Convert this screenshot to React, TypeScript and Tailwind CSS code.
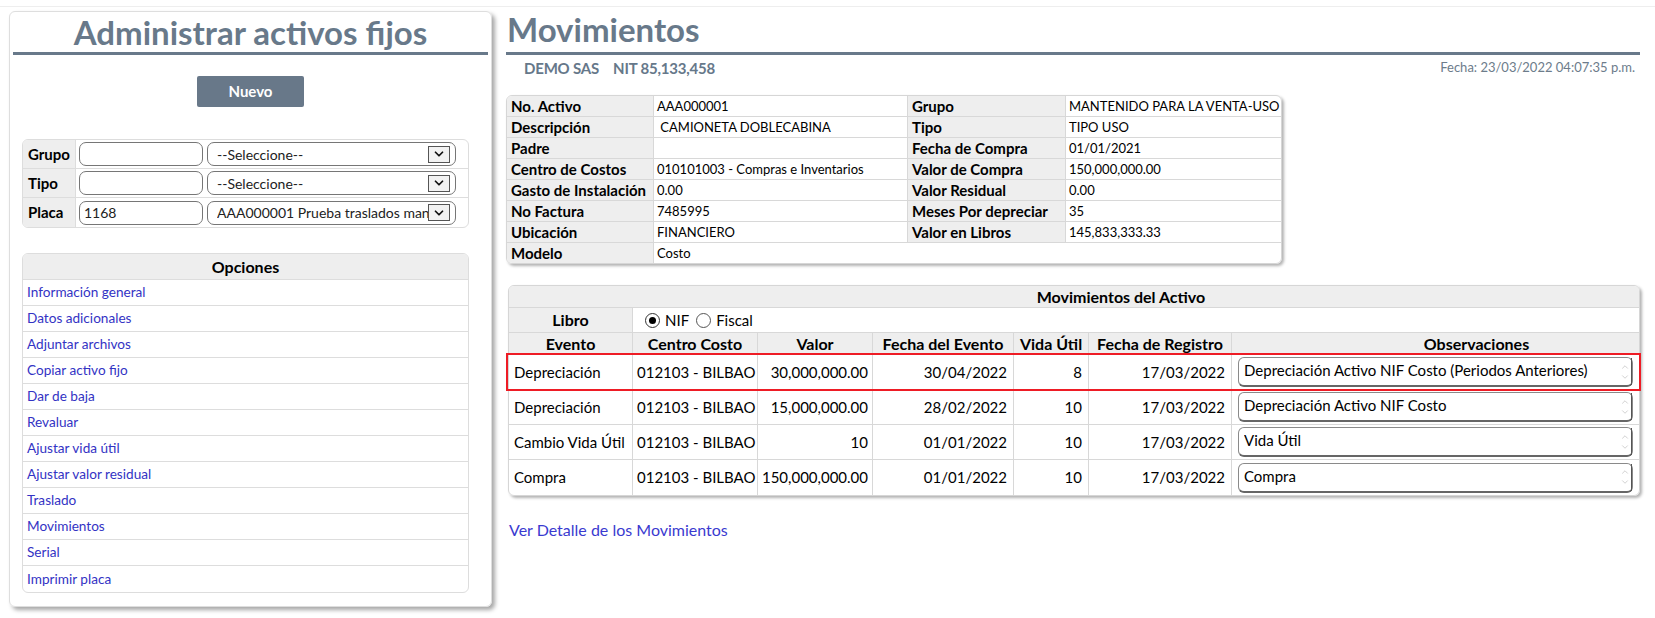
import { ChevronDown, ChevronUp } from "lucide-react";

const opciones = [
  "Información general",
  "Datos adicionales",
  "Adjuntar archivos",
  "Copiar activo fijo",
  "Dar de baja",
  "Revaluar",
  "Ajustar vida útil",
  "Ajustar valor residual",
  "Traslado",
  "Movimientos",
  "Serial",
  "Imprimir placa",
];

const info = [
  ["No. Activo", "AAA000001", "Grupo", "MANTENIDO PARA LA VENTA-USO"],
  ["Descripción", " CAMIONETA DOBLECABINA", "Tipo", "TIPO USO"],
  ["Padre", "", "Fecha de Compra", "01/01/2021"],
  ["Centro de Costos", "010101003 - Compras e Inventarios", "Valor de Compra", "150,000,000.00"],
  ["Gasto de Instalación", "0.00", "Valor Residual", "0.00"],
  ["No Factura", "7485995", "Meses Por depreciar", "35"],
  ["Ubicación", "FINANCIERO", "Valor en Libros", "145,833,333.33"],
];

const movs = [
  ["Depreciación", "012103 - BILBAO", "30,000,000.00", "30/04/2022", "8", "17/03/2022", "Depreciación Activo NIF Costo (Periodos Anteriores)"],
  ["Depreciación", "012103 - BILBAO", "15,000,000.00", "28/02/2022", "10", "17/03/2022", "Depreciación Activo NIF Costo"],
  ["Cambio Vida Útil", "012103 - BILBAO", "10", "01/01/2022", "10", "17/03/2022", "Vida Útil"],
  ["Compra", "012103 - BILBAO", "150,000,000.00", "01/01/2022", "10", "17/03/2022", "Compra"],
];

function Filtro({ label, texto, opcion, last }: { label: string; texto: string; opcion: string; last?: boolean }) {
  return (
    <div className={"flex h-[29px] " + (last ? "" : "border-b border-[#dddddd]")}>
      <div className="w-[53px] bg-[#eeeeee] border-r border-[#dddddd] pl-[5px] flex items-center text-[15px] font-bold text-black">
        {label}
      </div>
      <div className="flex items-center pl-[3px] gap-[4px]">
        <div className="w-[124px] h-[24px] rounded-[7px] border border-[#767676] flex items-center pl-[4px] text-[14px] text-[#222]">
          {texto}
        </div>
        <div className="w-[249px] h-[24px] rounded-[7px] border border-[#767676] flex items-center pl-[9px] pr-[5px] text-[14px] text-[#222]">
          <span className="flex-1 whitespace-nowrap overflow-hidden">{opcion}</span>
          <span className="w-[22px] h-[17px] border border-[#555] bg-[#f2f2f2] flex items-center justify-center">
            <ChevronDown size={14} strokeWidth={3} className="text-[#111]" />
          </span>
        </div>
      </div>
    </div>
  );
}

export default function App() {
  return (
    <div className="w-[1655px] h-[618px] bg-white font-['Lato',sans-serif] overflow-hidden">
      <div className="h-[7px] border-b border-[#eeeeee]" />
      <div className="flex items-start">
        {/* panel izquierdo */}
        <div className="ml-[9px] mt-[4px] w-[483px] h-[596px] rounded-[6px] border border-[#dedede] shadow-[3px_3px_4px_rgba(0,0,0,0.35)] px-[3px]">
          <h1 className="h-[40px] text-center text-[33px] font-bold text-[#68798a] leading-[40px]">
            Administrar activos fijos
          </h1>
          <div className="h-[3px] bg-[#68798a]" />
          <div className="flex justify-center mt-[21px]">
            <button className="w-[107px] h-[31px] rounded-[2px] bg-[#687889] text-white font-bold text-[15px]">
              Nuevo
            </button>
          </div>
          <div className="ml-[9px] mt-[32px] w-[447px] rounded-[6px] border border-[#dddddd] overflow-hidden">
            <Filtro label="Grupo" texto="" opcion="--Seleccione--" />
            <Filtro label="Tipo" texto="" opcion="--Seleccione--" />
            <Filtro label="Placa" texto="1168" opcion="AAA000001 Prueba traslados mantenido" last />
          </div>
          <div className="ml-[9px] mt-[25px] w-[447px] rounded-[6px] border border-[#dddddd] overflow-hidden">
            <div className="h-[26px] bg-[#eeeeee] border-b border-[#dddddd] flex items-center justify-center text-[16px] font-bold text-black">
              Opciones
            </div>
            {opciones.map((o, i) => (
              <div
                key={o}
                className={"h-[26px] flex items-center pl-[4px] text-[13.6px] text-[#3333c4] " + (i < opciones.length - 1 ? "border-b border-[#dddddd]" : "")}
              >
                {o}
              </div>
            ))}
          </div>
        </div>

        {/* contenido */}
        <div className="ml-[14px] w-[1134px]">
          <h2 className="h-[45px] text-[33px] font-bold text-[#68798a] leading-[40px] pl-[1px] pt-[2px]">
            Movimientos
          </h2>
          <div className="h-[3px] bg-[#68798a]" />
          <div className="flex justify-between items-center pl-[18px] pr-[5px] mt-[4px] h-[18px]">
            <div className="text-[15px] font-bold text-[#66788a] tracking-[-0.2px]">
              DEMO SAS<span className="ml-[14px]">NIT 85,133,458</span>
            </div>
            <div className="text-[13px] text-[#6d7c8b]">Fecha: 23/03/2022 04:07:35 p.m.</div>
          </div>

          {/* datos del activo */}
          <div className="mt-[18px] w-[776px] rounded-[6px] border border-[#d6d6d6] overflow-hidden shadow-[2px_2px_3px_rgba(0,0,0,0.3)] text-[13px] leading-[20px] text-black">
            <div className="grid grid-cols-[147px_254px_158px_215px]">
              {info.map((r) => (
                <div key={r[0]} className="contents">
                  <div className="h-[21px] bg-[#eeeeee] border-b border-r border-[#d8d8d8] pl-[4px] flex items-center font-bold text-[15px] whitespace-nowrap">{r[0]}</div>
                  <div className="h-[21px] border-b border-r border-[#d8d8d8] pl-[3px] flex items-center whitespace-pre">{r[1]}</div>
                  <div className="h-[21px] bg-[#eeeeee] border-b border-r border-[#d8d8d8] pl-[4px] flex items-center font-bold text-[15px] whitespace-nowrap">{r[2]}</div>
                  <div className="h-[21px] border-b border-[#d8d8d8] pl-[3px] flex items-center whitespace-nowrap">{r[3]}</div>
                </div>
              ))}
              <div className="h-[20px] bg-[#eeeeee] border-r border-[#d8d8d8] pl-[4px] flex items-center font-bold text-[15px]">Modelo</div>
              <div className="h-[20px] col-span-3 pl-[3px] flex items-center">Costo</div>
            </div>
          </div>

          {/* movimientos del activo */}
          <div className="relative mt-[21px] ml-[2px] w-[1132px]">
            <div className="rounded-[6px] border border-[#d6d6d6] overflow-hidden shadow-[2px_2px_3px_rgba(0,0,0,0.3)] text-[15px] text-black">
              <div className="h-[22px] bg-[#eeeeee] border-b border-[#d8d8d8] flex items-center justify-center pl-[94px] font-bold text-[16px]">
                Movimientos del Activo
              </div>
              <div className="flex h-[25px] border-b border-[#d8d8d8]">
                <div className="w-[124px] bg-[#eeeeee] border-r border-[#d8d8d8] flex items-center justify-center font-bold text-[16px]">Libro</div>
                <div className="flex items-center pl-[12px] gap-[5px]">
                  <span className="w-[15px] h-[15px] rounded-full border border-[#333] flex items-center justify-center">
                    <span className="w-[7px] h-[7px] rounded-full bg-black" />
                  </span>
                  <span className="mr-[2px]">NIF</span>
                  <span className="w-[15px] h-[15px] rounded-full border border-[#555]" />
                  <span>Fiscal</span>
                </div>
              </div>
              <div className="grid grid-cols-[124px_125px_115px_141px_75px_143px_407px]">
                {["Evento", "Centro Costo", "Valor", "Fecha del Evento", "Vida Útil", "Fecha de Registro"].map((h) => (
                  <div key={h} className="h-[22px] bg-[#eeeeee] border-b border-r border-[#d8d8d8] flex items-center justify-center font-bold text-[16px] whitespace-nowrap">
                    {h}
                  </div>
                ))}
                <div className="h-[22px] bg-[#eeeeee] border-b border-[#d8d8d8] flex items-center justify-center pl-[82px] font-bold text-[16px]">
                  Observaciones
                </div>
                {movs.map((m, i) => {
                  const b = i < movs.length - 1 ? "border-b " : "";
                  return (
                    <div key={i} className="contents">
                      <div className={"h-[35px] border-r border-[#d8d8d8] flex items-center pl-[5px] whitespace-nowrap " + b}>{m[0]}</div>
                      <div className={"h-[35px] border-r border-[#d8d8d8] flex items-center pl-[4px] whitespace-nowrap " + b}>{m[1]}</div>
                      <div className={"h-[35px] border-r border-[#d8d8d8] flex items-center justify-end pr-[4px] " + b}>{m[2]}</div>
                      <div className={"h-[35px] border-r border-[#d8d8d8] flex items-center justify-end pr-[6px] " + b}>{m[3]}</div>
                      <div className={"h-[35px] border-r border-[#d8d8d8] flex items-center justify-end pr-[6px] " + b}>{m[4]}</div>
                      <div className={"h-[35px] border-r border-[#d8d8d8] flex items-center justify-end pr-[6px] " + b}>{m[5]}</div>
                      <div className={"h-[35px] border-[#d8d8d8] flex items-center pl-[6px] pr-[6px] " + b}>
                        <div className="w-full h-[30px] rounded-[6px] border border-[#8a8a8a] border-b-[2px] border-b-[#666] flex pl-[5px]">
                          <span className="flex-1 pt-[1px] whitespace-nowrap overflow-hidden">{m[6]}</span>
                          <span className="w-[14px] flex flex-col items-center justify-center text-[#b5b5b5] border-r border-[#555]">
                            <ChevronUp size={10} strokeWidth={1.5} />
                            <ChevronDown size={10} strokeWidth={1.5} />
                          </span>
                        </div>
                      </div>
                    </div>
                  );
                })}
              </div>
            </div>
            <div className="absolute left-[-2px] top-[68px] w-[1135px] h-[38px] border-2 border-[#ee1c25] pointer-events-none" />
          </div>

          <div className="mt-[22px] ml-[3px] text-[16px] text-[#3a3ad0]">Ver Detalle de los Movimientos</div>
        </div>
      </div>
    </div>
  );
}
